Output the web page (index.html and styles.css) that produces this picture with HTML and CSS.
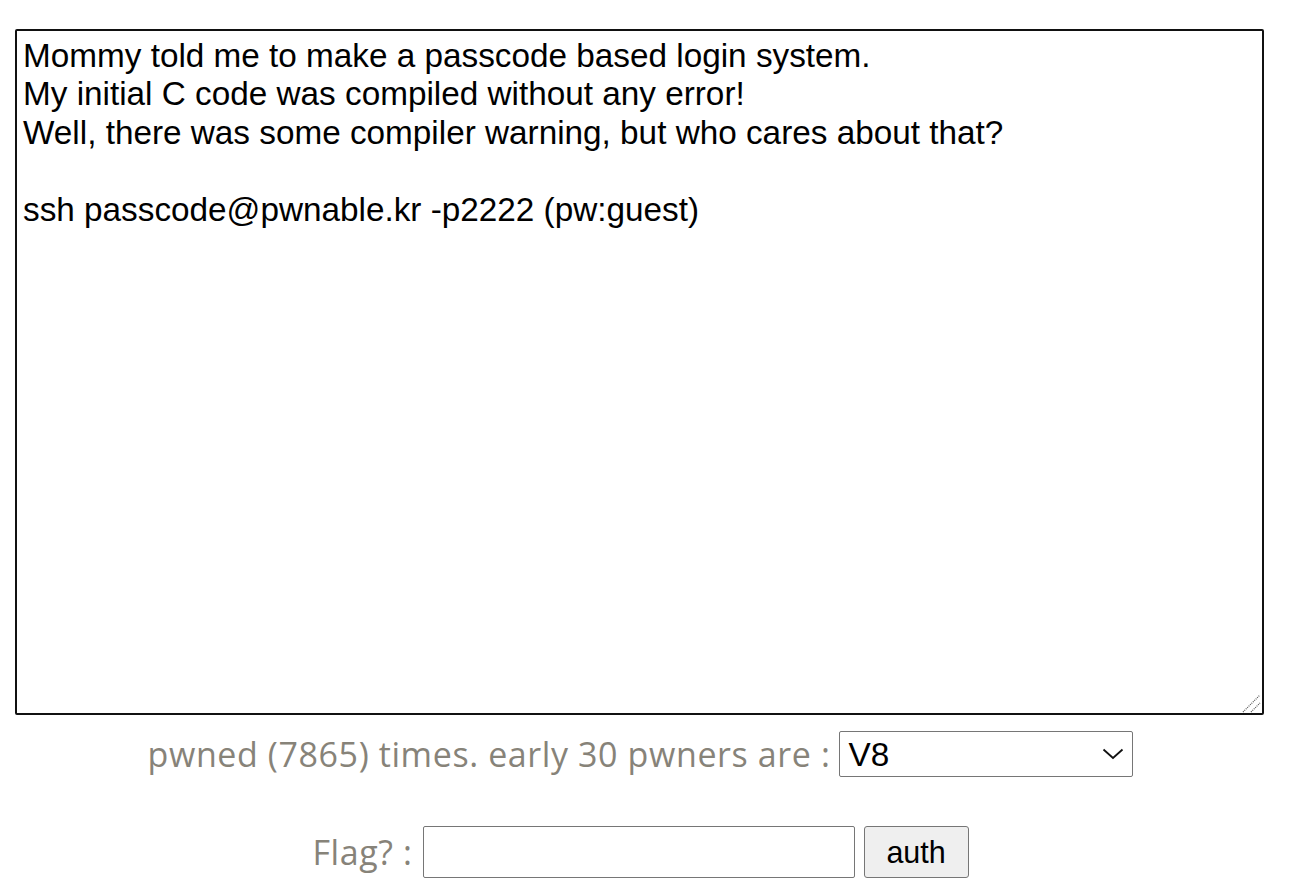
FILE: index.html
```html
<!DOCTYPE html>
<html>
<head>
<meta charset="utf-8">
<title>passcode</title>
<link rel="stylesheet" href="styles.css">
</head>
<body>
<div class="wrap">
  <div class="desc-box">
    <textarea class="desc" readonly>Mommy told me to make a passcode based login system.
My initial C code was compiled without any error!
Well, there was some compiler warning, but who cares about that?

ssh passcode@pwnable.kr -p2222 (pw:guest)</textarea>
    <svg class="grip" width="20" height="20" viewBox="0 0 20 20">
      <line x1="1" y1="19" x2="18" y2="2" stroke="#555" stroke-width="1.2" stroke-dasharray="1 1"/>
      <line x1="9" y1="19" x2="18" y2="10" stroke="#555" stroke-width="1.2" stroke-dasharray="1 1"/>
    </svg>
  </div>
  <div class="row row-pwners">
    <span class="label">pwned (7865) times. early 30 pwners are :</span>
    <span class="select-wrap">
      <select class="pwners">
        <option>V8</option>
      </select>
      <svg class="chev" width="22" height="12" viewBox="0 0 22 12">
        <polyline points="1.5,1.5 11,10 20.5,1.5" fill="none" stroke="#111" stroke-width="1.8"/>
      </svg>
    </span>
  </div>
  <div class="row row-flag">
    <span class="label">Flag? :</span>
    <input class="flag" type="text">
    <button class="auth">auth</button>
  </div>
</div>
</body>
</html>
```

FILE: styles.css
```css
html, body {
  margin: 0;
  padding: 0;
  background: #ffffff;
}

.wrap {
  width: 1249px;
  padding: 29px 0 0 15px;
  display: flex;
  flex-direction: column;
}

.desc-box {
  position: relative;
  width: 1249px;
  height: 686px;
}

.desc {
  display: block;
  box-sizing: border-box;
  width: 1249px;
  height: 686px;
  margin: 0;
  border: 2px solid #111111;
  border-radius: 2px;
  padding: 6px 6px;
  font-family: "Liberation Sans", Arial, sans-serif;
  font-size: 33.3px;
  line-height: 38.4px;
  color: #000000;
  background: #ffffff;
  outline: none;
  resize: none;
}

.grip {
  position: absolute;
  right: 2px;
  bottom: 2px;
}

.row {
  display: flex;
  justify-content: center;
  align-items: center;
  padding-left: 2px;
}

.row-pwners {
  margin-top: 16px;
  gap: 9px;
}

.row-flag {
  margin-top: 49px;
  gap: 9px;
}

.label {
  font-family: "Open Sans", Lato, sans-serif;
  font-size: 34px;
  letter-spacing: 0.6px;
  color: #878379;
}

.row-flag .label {
  margin-right: 1px;
}

.select-wrap {
  position: relative;
  display: block;
  width: 294px;
  height: 46px;
}

.pwners {
  display: block;
  box-sizing: border-box;
  width: 294px;
  height: 46px;
  margin: 0;
  border: 1px solid #767676;
  border-radius: 2px;
  padding: 0 40px 0 8px;
  font-family: "Liberation Sans", Arial, sans-serif;
  font-size: 33.3px;
  color: #000000;
  background: #ffffff;
  appearance: none;
  -webkit-appearance: none;
}

.chev {
  position: absolute;
  right: 9px;
  top: 17px;
  pointer-events: none;
}

.flag {
  box-sizing: border-box;
  width: 432px;
  height: 52px;
  margin: 0;
  border: 1px solid #767676;
  border-radius: 2px;
  padding: 0 8px;
  font-family: "Liberation Sans", Arial, sans-serif;
  font-size: 31px;
  background: #ffffff;
}

.auth {
  box-sizing: border-box;
  width: 105px;
  height: 52px;
  margin: 0;
  border: 1px solid #767676;
  border-radius: 3px;
  padding: 0;
  font-family: "Liberation Sans", Arial, sans-serif;
  font-size: 30.5px;
  color: #000000;
  background: #efefef;
}
```
